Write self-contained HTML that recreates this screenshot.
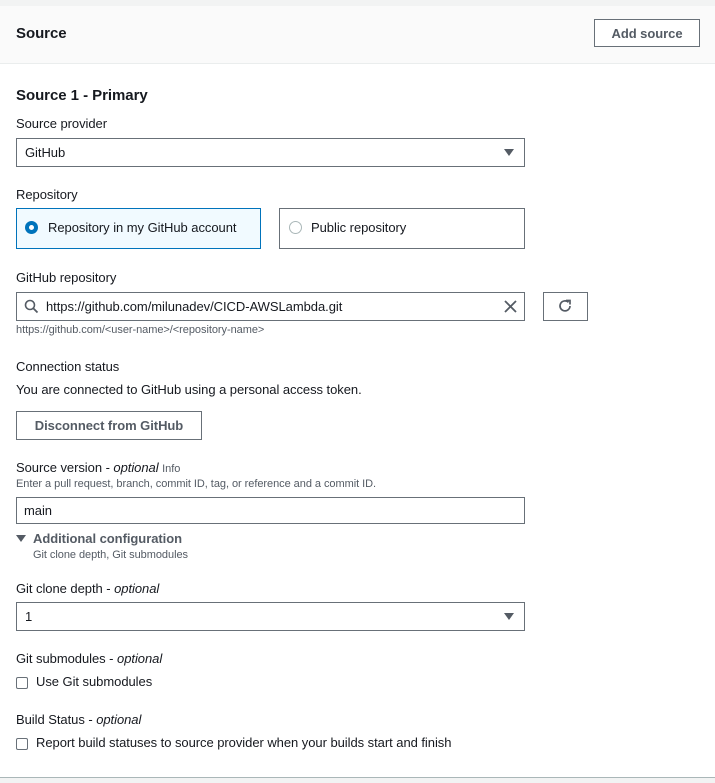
<!DOCTYPE html>
<html><head><meta charset="utf-8"><style>
*{box-sizing:border-box;margin:0;padding:0}
body{width:715px;height:783px;background:#fff;font-family:"Liberation Sans",sans-serif;color:#16191f;position:relative;overflow:hidden;font-size:13px;letter-spacing:-0.05px}
.a{position:absolute;white-space:nowrap}
.box{position:absolute;border:1px solid #687078;background:#fff}
.lbl{font-size:13px}
.sm{font-size:11px;color:#545b64}
i{font-style:italic}
.tri{position:absolute;width:0;height:0;border-left:5px solid transparent;border-right:5px solid transparent;border-top:7px solid #545b64}
.cb{position:absolute;width:12px;height:12px;border:1px solid #687078;border-radius:2px;background:#fff}
</style></head><body>
<div class="a" style="left:0;top:0;width:715px;height:6px;background:#f2f3f3"></div>
<div class="a" style="left:0;top:6px;width:715px;height:58px;background:#fafafa;border-bottom:1px solid #eaeded"></div>
<div class="a" style="left:16px;top:25px;font-size:15px;font-weight:bold">Source</div>
<div class="box" style="left:594px;top:19px;width:106px;height:28px;display:flex;align-items:center;justify-content:center;font-weight:bold;color:#545b64;font-size:13px">Add source</div>

<div class="a" style="left:16px;top:87px;font-size:15px;font-weight:bold">Source 1 - Primary</div>
<div class="a lbl" style="left:16px;top:116px">Source provider</div>
<div class="box" style="left:16px;top:138px;width:509px;height:29px"></div>
<div class="a" style="left:25px;top:145px">GitHub</div>
<div class="tri" style="left:504px;top:149px"></div>

<div class="a lbl" style="left:16px;top:187px">Repository</div>
<div class="box" style="left:16px;top:208px;width:245px;height:41px;border-color:#0073bb;background:#f1faff"></div>
<div class="a" style="left:25px;top:221px;width:13px;height:13px;border-radius:50%;border:4px solid #0073bb;background:#fff"></div>
<div class="a" style="left:48px;top:220px">Repository in my GitHub account</div>
<div class="box" style="left:279px;top:208px;width:246px;height:41px"></div>
<div class="a" style="left:289px;top:221px;width:13px;height:13px;border-radius:50%;border:1px solid #aab7b8"></div>
<div class="a" style="left:311px;top:220px">Public repository</div>

<div class="a lbl" style="left:16px;top:270px">GitHub repository</div>
<div class="box" style="left:16px;top:292px;width:509px;height:29px"></div>
<svg class="a" style="left:24px;top:299px" width="15" height="15" viewBox="0 0 15 15"><circle cx="6" cy="6" r="4.5" fill="none" stroke="#545b64" stroke-width="1.6"/><path d="M9.5 9.5L13.5 13.5" stroke="#545b64" stroke-width="1.8"/></svg>
<div class="a" style="left:46px;top:299px">https://github.com/milunadev/CICD-AWSLambda.git</div>
<svg class="a" style="left:504px;top:300px" width="13" height="13" viewBox="0 0 13 13"><path d="M1 1L12 12M12 1L1 12" stroke="#545b64" stroke-width="1.8"/></svg>
<div class="box" style="left:543px;top:292px;width:45px;height:29px"></div>
<svg class="a" style="left:557px;top:298px" width="16" height="16" viewBox="0 0 16 16"><path d="M13 8A5 5 0 1 1 11.5 4.3" fill="none" stroke="#545b64" stroke-width="1.7"/><path d="M9 2.5L13 2.5L13 6.5" fill="none" stroke="#545b64" stroke-width="1.7"/></svg>
<div class="a sm" style="left:16px;top:324px">https://github.com/&lt;user-name&gt;/&lt;repository-name&gt;</div>

<div class="a lbl" style="left:16px;top:359px">Connection status</div>
<div class="a" style="left:16px;top:382px">You are connected to GitHub using a personal access token.</div>
<div class="box" style="left:16px;top:411px;width:186px;height:29px;display:flex;align-items:center;justify-content:center;font-weight:bold;color:#545b64">Disconnect from GitHub</div>

<div class="a lbl" style="left:16px;top:460px">Source version - <i>optional</i> <span style="font-size:11px;color:#545b64">Info</span></div>
<div class="a sm" style="left:16px;top:478px">Enter a pull request, branch, commit ID, tag, or reference and a commit ID.</div>
<div class="box" style="left:16px;top:497px;width:509px;height:27px"></div>
<div class="a" style="left:24px;top:503px">main</div>
<div class="tri" style="left:16px;top:535px"></div>
<div class="a" style="left:33px;top:531px;font-weight:bold;color:#545b64">Additional configuration</div>
<div class="a sm" style="left:33px;top:549px">Git clone depth, Git submodules</div>

<div class="a lbl" style="left:16px;top:581px">Git clone depth - <i>optional</i></div>
<div class="box" style="left:16px;top:602px;width:509px;height:29px"></div>
<div class="a" style="left:25px;top:609px">1</div>
<div class="tri" style="left:504px;top:613px"></div>

<div class="a lbl" style="left:16px;top:651px">Git submodules - <i>optional</i></div>
<div class="cb" style="left:16px;top:677px"></div>
<div class="a" style="left:36px;top:674px">Use Git submodules</div>

<div class="a lbl" style="left:16px;top:712px">Build Status - <i>optional</i></div>
<div class="cb" style="left:16px;top:738px"></div>
<div class="a" style="left:36px;top:735px">Report build statuses to source provider when your builds start and finish</div>

<div class="a" style="left:0;top:777px;width:715px;height:6px;background:#f2f3f3;border-top:1px solid #aab7b8"></div>
</body></html>
